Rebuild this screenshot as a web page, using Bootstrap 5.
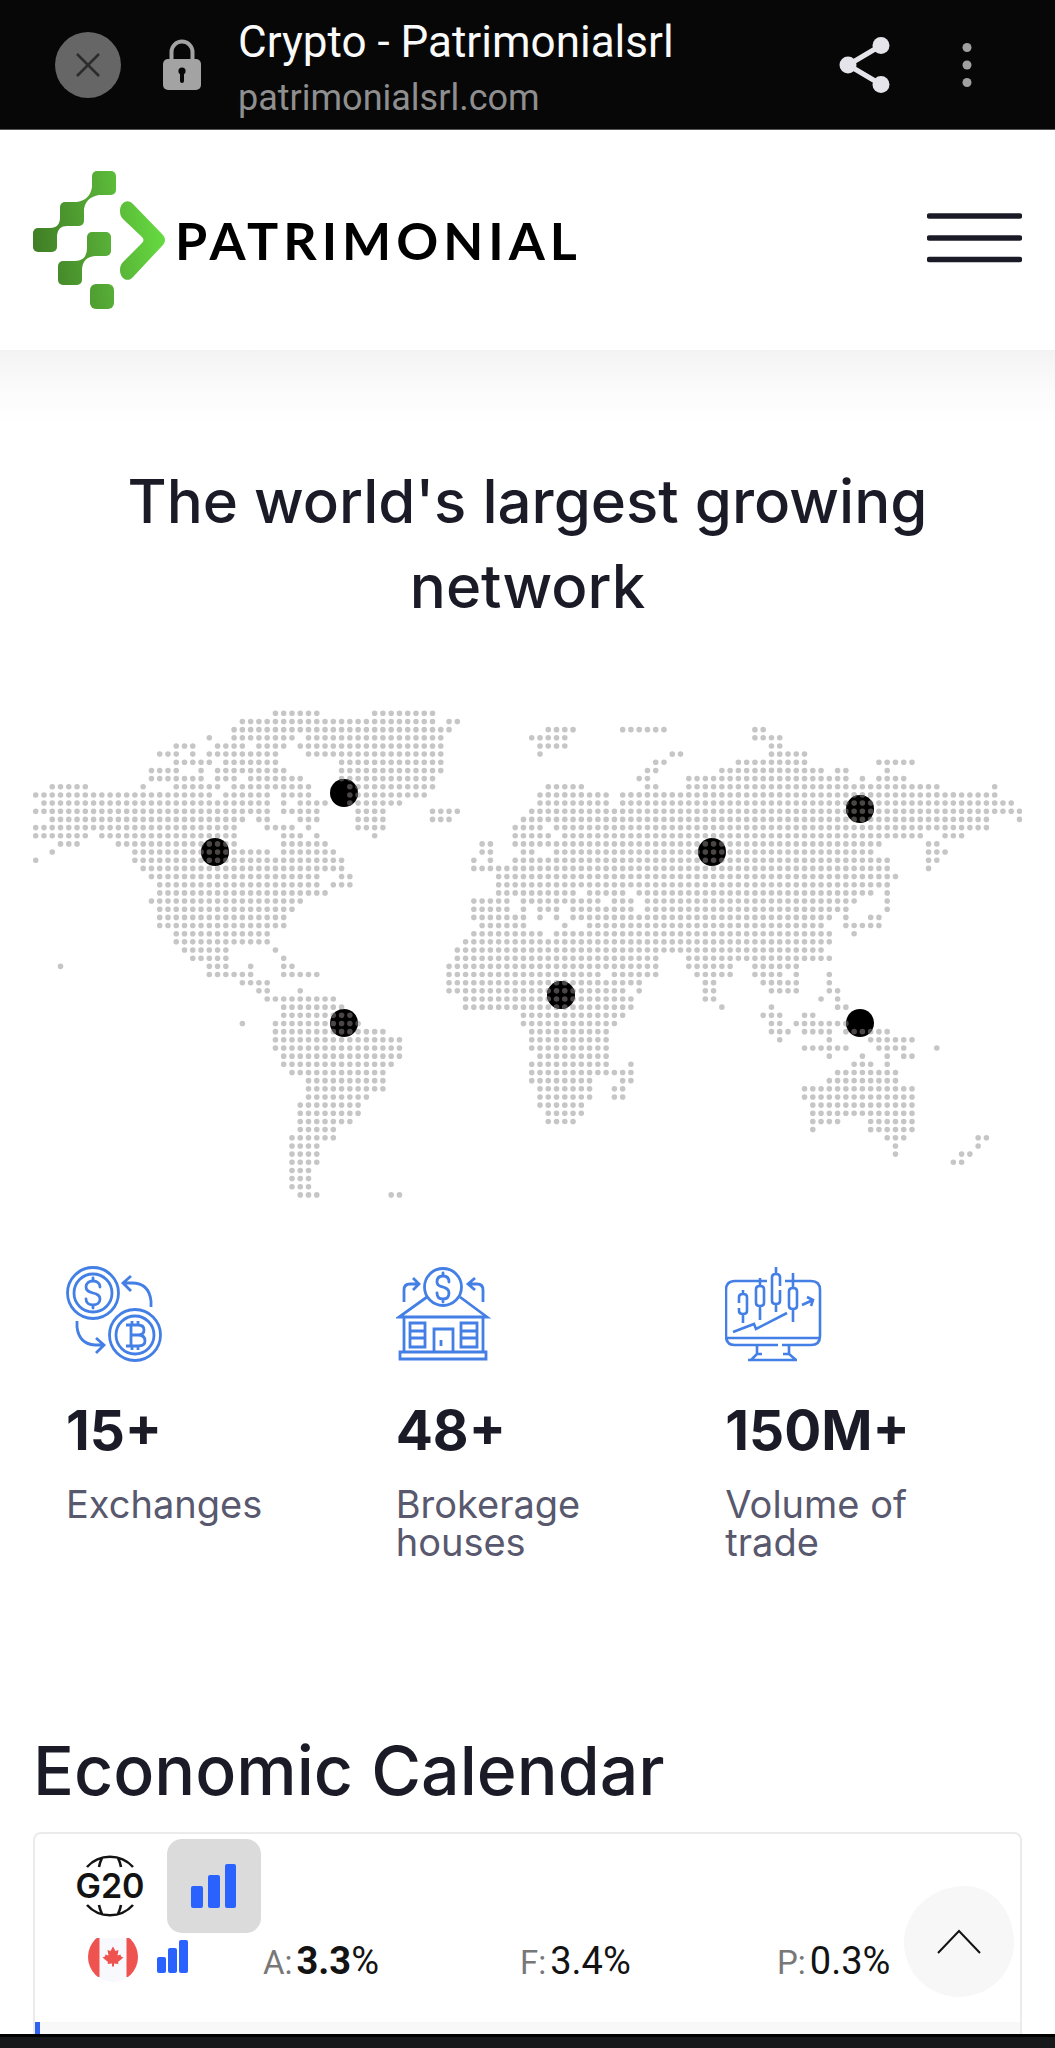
<!DOCTYPE html>
<html lang="en">
<head>
<meta charset="utf-8">
<meta name="viewport" content="width=device-width, initial-scale=1">
<title>Crypto - Patrimonialsrl</title>
<link href="https://cdn.jsdelivr.net/npm/bootstrap@5.3.0/dist/css/bootstrap.min.css" rel="stylesheet">
<style>
  body { font-family: Inter, "Open Sans", sans-serif; color: #1b1b28; background: #fff; }
  svg { display: block; flex: none; }
  .browser-bar { height: 130px; background: #070707; font-family: Roboto, sans-serif; padding: 0 76px 0 55px; border-bottom: 1px solid #555; }
  .browser-bar button { background: none; border: 0; padding: 0; }
  .lock-icon { margin: 0 37px 0 42px; }
  .tab-text { padding-top: 8px; }
  .tab-title { font-size: 44px; line-height: 58px; color: #fafafa; }
  .tab-host { font-size: 36px; line-height: 54px; color: #8f8f8f; }
  .site-head { height: 220px; padding: 0 33px; background: #fff; }
  .head-shadow { height: 88px; background: linear-gradient(#f3f3f3, #fbfbfb 45%, #fff 85%); }
  .wordmark { font: 700 52px/64px Lato, sans-serif; letter-spacing: 5px; color: #000; }
  .page-pad { padding-left: 33px; padding-right: 33px; }
  .net-title { font-size: 60px; line-height: 85px; font-weight: 500; padding: 21px 60px 79px; }
  .stat-grid { padding-top: 67px; }
  .stat-item { padding: 0 33px; }
  .stat-num { font-size: 55px; line-height: 60px; font-weight: 700; margin-top: 37px; }
  .stat-label { font-size: 38px; line-height: 38px; color: #58586e; margin-top: 25px; }
  .cal-title { font-size: 68px; line-height: 80px; font-weight: 500; padding-top: 169px; margin-bottom: 22px; }
  .cal-box { border: 2px solid #ebebeb; border-bottom: 0; border-radius: 8px 8px 0 0; position: relative; font-family: Roboto, sans-serif; color: #131313; }
  .cal-filters { height: 104px; padding: 5px 0 0 40px; gap: 19px; }
  .cal-filters button { border: 0; padding: 0; background: none; }
  .cal-filters .imp-btn { width: 94px; height: 94px; border-radius: 15px; background: #dbdbdb; display: flex; align-items: center; justify-content: center; }
  .cal-row { height: 84px; padding-left: 53px; }
  .imp-bars { margin: 2px 0 0 19px; }
  .cal-vals { padding-left: 75px; line-height: 46px; }
  .cal-vals > div { flex: 0 0 257px; }
  .cal-key { font-size: 33px; color: #787878; }
  .cal-val { font-size: 38px; }
  .cal-next { height: 12px; background: #f8f8f8; border-left: 5px solid #2f62f0; }
  .to-top { position: absolute; right: 6px; bottom: 37px; width: 110px; height: 111px; background: #f7f7f7; border: 0; padding: 0; border-radius: 56% 44% 50% 50% / 51% 51% 49% 49%; display: flex; align-items: center; justify-content: center; }
  .sys-bar { height: 14px; background: #17181a; border-top: 3px solid #000; }
</style>
</head>
<body>
<header class="browser-bar d-flex align-items-center">
  <button type="button" aria-label="Close tab">
    <svg width="66" height="66" viewBox="0 0 66 66"><circle cx="33" cy="33" r="33" fill="#666"/><path d="M22 22l22 22M44 22L22 44" stroke="#2c2c2c" stroke-width="2.6"/></svg>
  </button>
  <svg class="lock-icon" width="38" height="52" viewBox="0 0 38 52"><path d="M8.500 24V13a10.500 10.500 0 0 1 21 0v11" fill="none" stroke="#a3a3a3" stroke-width="4"/><rect y="20" width="38" height="31" rx="5" fill="#a3a3a3"/><circle cx="19" cy="32" r="3.600" fill="#070707"/><path d="M19 33v9" stroke="#070707" stroke-width="4" stroke-linecap="round"/></svg>
  <div class="flex-grow-1 tab-text">
    <div class="tab-title text-nowrap">Crypto - Patrimonialsrl</div>
    <div class="tab-host text-nowrap">patrimonialsrl.com</div>
  </div>
  <button type="button" aria-label="Share" class="me-5">
    <svg width="52" height="58" viewBox="0 0 52 58"><path d="M42 9.500L9 29l33 19.500" fill="none" stroke="#e4e4ea" stroke-width="5"/><g fill="#e4e4ea"><circle cx="42" cy="9.500" r="8.500"/><circle cx="9" cy="29" r="8.500"/><circle cx="42" cy="48.500" r="8.500"/></g></svg>
  </button>
  <button type="button" aria-label="More" class="ms-3">
    <svg width="24" height="46" viewBox="0 0 24 46" fill="#a0a0a0"><circle cx="12" cy="5.500" r="4.500"/><circle cx="12" cy="23" r="4.500"/><circle cx="12" cy="40.500" r="4.500"/></svg>
  </button>
</header>

<nav class="site-head d-flex align-items-center justify-content-between">
  <a href="#" class="d-flex align-items-center text-decoration-none" aria-label="Patrimonial home">
    <svg width="142" height="138" viewBox="0 0 142 138">
      <defs><linearGradient id="leaf" gradientUnits="userSpaceOnUse" x1="0" y1="80" x2="132" y2="60"><stop offset="0" stop-color="#3f7d25"/><stop offset=".5" stop-color="#55a935"/><stop offset="1" stop-color="#66dc40"/></linearGradient></defs>
      <g fill="url(#leaf)">
        <rect x="59" y="0" width="24" height="24" rx="5"/><rect x="27" y="31" width="24" height="24" rx="5"/><rect x="0" y="57" width="24" height="24" rx="5"/>
        <rect x="54" y="61" width="24" height="24" rx="5"/><rect x="25" y="90" width="24" height="24" rx="5"/><rect x="57" y="113" width="24" height="25" rx="6"/>
        <path d="M59 16Q57 29 44 31L51 38Q53 26 66 24ZM27 46Q27 57 17 57L24 64Q25 55 34 55ZM54 77Q54 90 42 90L49 98Q50 86 62 85Z"/>
        <path d="M87 40c0-9 8-13 13-7l29 30c4 4 4 8 0 12l-29 31c-5 6-13 2-13-7 0-4 1-6 4-9l18-18c2-2 2-4 0-6L91 49c-3-3-4-5-4-9z"/>
      </g>
    </svg>
    <span class="wordmark">PATRIMONIAL</span>
  </a>
  <button type="button" class="border-0 bg-transparent p-0" aria-label="Menu">
    <svg width="95" height="54" viewBox="0 0 95 54" stroke="#1b1b28" stroke-width="5.500" stroke-linecap="round"><path d="M2.500 3h90M2.500 25h90M2.500 46.500h90"/></svg>
  </button>
</nav>
<div class="head-shadow"></div>

<main class="page-pad">
  <h1 class="net-title text-center m-0">The world's largest growing network</h1>

  <svg class="w-100 h-auto" viewBox="0 0 989 490" role="img" aria-label="World map of network locations">
    <defs>
      <path id="dots"/>
      <clipPath id="pinClip"></clipPath>
    </defs>
    <use href="#dots" fill="#c6c6c6"/>
    <g id="pins" fill="#000"></g>
    <use href="#dots" fill="#4b4646" clip-path="url(#pinClip)"/>
  </svg>

  <section class="row g-0 stat-grid">
    <div class="col-4 stat-item">
      <svg width="96" height="98" viewBox="0 0 96 98" fill="none" stroke="#447fe5" stroke-width="2.800">
        <circle cx="27" cy="28" r="25.500"/><circle cx="27" cy="28" r="19"/><circle cx="69" cy="70" r="25.500"/><circle cx="69" cy="70" r="19"/>
        <path d="M34 22c0-4-3-6-7-6s-7 2-7 6 3 5 7 6 7 2 7 6-3 6-7 6-7-2-7-6M27 13v3M27 40v3" stroke-linecap="round"/>
        <path d="M60 60h12q6 0 6 5t-6 5q7 0 7 6 0 5-7 5H60M65 60v21M65 70h7M66 56v4M72 56v4M66 81v4M72 81v4"/>
        <path d="M85 42V36Q83 18 66 18H58M65 11l-8 7 8 8M11 56v6q2 17 18 18h8M30 73l8 7-8 8"/>
      </svg>
      <div class="stat-num">15+</div>
      <div class="stat-label">Exchanges</div>
    </div>
    <div class="col-4 stat-item">
      <svg width="96" height="98" viewBox="0 0 96 98" fill="none" stroke="#447fe5" stroke-width="2.800">
        <circle cx="47" cy="22" r="18.500"/>
        <path d="M53 17c0-4-2-6-6-6s-6 2-6 6 3 4 6 5 6 2 6 6-2 6-6 6-6-2-6-6M47 8v3M47 34v3" stroke-linecap="round"/>
        <path d="M31 32L3 52h88L64 32M8 53v34M87 53v34M4 87h86v7H4ZM38 87V64h19v23M45 75v6M14 58h15v24H14ZM65 58h16v24H65ZM14 66h15M14 73h15M65 66h16M65 73h16"/>
        <path d="M8 37V25q0-6 6-6h8M17 13l6 6-6 6M87 37V25q0-6-6-6h-8M79 13l-7 6 7 6"/>
      </svg>
      <div class="stat-num">48+</div>
      <div class="stat-label">Brokerage houses</div>
    </div>
    <div class="col-4 stat-item">
      <svg width="98" height="98" viewBox="0 0 98 98" fill="none" stroke="#447fe5" stroke-width="2.600">
        <path d="M42 16H10q-9 0-9 9v46q0 9 9 9h43M60 16h26q9 0 9 9v46q0 9-9 9H57M1 73h94M32 80v9l-6 6M64 80v9l7 6M31 89h6M64 89h-6M23 95h49"/>
        <path d="M18 25v4M14 38v-6q0-3 4-3t4 3v14q0 3-4 3t-4-3v-3M18 49v9M35 13v8M31 24q0-3 4-3t4 3v14q0 3-4 3t-4-3ZM35 41v14M51 2v7M55 21v-9q0-3-4-3t-4 3v24q0 3 4 3t4-3V25M51 39v8M68 8v15M64 26q0-3 4-3t4 3v15q0 3-4 3t-4-3ZM68 44v13"/>
        <path d="M8 67l21-8 2 5 31-16M77 40l11-5M82 32l6 3-2 6"/>
      </svg>
      <div class="stat-num">150M+</div>
      <div class="stat-label">Volume of trade</div>
    </div>
  </section>

  <h2 class="cal-title">Economic Calendar</h2>
  <section class="cal-box">
    <div class="cal-filters d-flex align-items-start">
      <button type="button" aria-label="G20 countries" class="pt-3">
        <svg width="73" height="64" viewBox="0 0 73 64">
          <g fill="none" stroke="#131313" stroke-width="2.600"><path d="M12 12a31 31 0 0 1 46 0M12 50a31 31 0 0 0 46 0M27 3q-2 4-3 9M43 3q2 4 3 9M24 50q1 5 3 9M46 50q-1 5-3 9"/></g>
          <text x="35" y="43" text-anchor="middle" font-family="Inter, sans-serif" font-weight="600" font-size="34" fill="#131313">G20</text>
        </svg>
      </button>
      <button type="button" class="imp-btn" aria-label="Importance">
        <svg width="46" height="46" viewBox="0 0 46 46" fill="#2962ff"><rect y="23" width="12" height="22" rx="2"/><rect x="17" y="12" width="12" height="33" rx="2"/><rect x="34" y="1" width="11" height="44" rx="2"/></svg>
      </button>
    </div>
    <div class="cal-row d-flex align-items-start">
      <svg width="50" height="44" viewBox="0 0 50 44">
        <defs><clipPath id="flagClip"><circle cx="25" cy="19" r="25"/></clipPath></defs>
        <g clip-path="url(#flagClip)"><path fill="#f8f9fd" d="M0 0h50v44H0z"/><path fill="#ef5350" d="M0 0h11.500v39H0zM38.500 0H50v39H38.500zM25 8.500l2.500 4.500 3-1-1 5.500 3-1 .5 2 2.500 1-5.500 4.500.5 2-4.500-.5v3h-2v-3l-4.500.5.5-2-5.500-4.500 2.500-1 .5-2 3 1-1-5.500 3 1z"/></g>
      </svg>
      <svg class="imp-bars" width="31" height="34" viewBox="0 0 31 34" fill="#2962ff"><rect y="17" width="9" height="16" rx="2"/><rect x="11" y="8" width="9" height="25" rx="2"/><rect x="22" width="9" height="33" rx="2"/></svg>
      <div class="cal-vals d-flex flex-grow-1">
        <div><span class="cal-key">A:</span> <span class="cal-val"><b class="fw-bold">3.3</b>%</span></div>
        <div><span class="cal-key">F:</span> <span class="cal-val">3.4%</span></div>
        <div class="flex-shrink-1"><span class="cal-key">P:</span> <span class="cal-val">0.3%</span></div>
      </div>
    </div>
    <div class="cal-next"></div>
    <button type="button" class="to-top" aria-label="Back to top">
      <svg width="46" height="26" viewBox="0 0 46 26" fill="none" stroke="#131313" stroke-width="2"><path d="M2 24L23 2l21 22"/></svg>
    </button>
  </section>
</main>
<footer class="sys-bar"></footer>

<script>
  // Land cells of the dotted map: one entry per row, each a list of column runs.
  const land = `29-34 41-48|25-48 50-51|24-50 62-65 71-76 87-88|21 24-31 33-49 60-64 87-90|17-19 22-25 27-30 32-49 61-64 89-90|15-17 19 21-29 33-49 61 77-78 89-93|17-21 23-29 37-49 75-76 85-93 102-106|14-17 20 22-30 37-49 74-75 83-95 97-98 103|14-20 22-24 26-32 37-48 73-74 79-98 100 102-105|2-6 13 17-22 24-33 38-48 62-66 74-75 79-109 116|0-21 23-28 30-33 38-47 61-69 71-116|1-28 30 32-35 38-44 61-69 71-118|0-28 30-34 39-42 48-51 60-119|2-25 27-28 32-34 39-42 48-50 59-115 119|0-24 28-31 33 39-42 58-61 63-115|0-6 8-24 30-32 34 41 58-62 64-107 110-112|3-5 10-24 30-35 54-55 58-102 108-109|2 12-28 30-36 54-55 59-60 63-101 108-110|0 12-37 53 55 58-103 108-109|13-37 53-103 108|14-34 37-38 56-104|15-34 36-38 56-103|15-35 56-65 67-71 73-101 103|14-32 53-57 59-68 70-72 74-99 103|15-31 53-57 59 61-63 65-72 74-98 103|15-30 53-59 61 63 65-96 98 101-102|15-30 54-59 64 67-95 98-102|17-28 53-61 63-96 99|17-28 52-96|18-23 29 51-95|19-23 30 51-75 79-96|3 21-23 26 30-31 50-75 79-84 87-92|21-26 30-34 50-68 70-75 80-84 87-90 92 96|25-28 50-73 81-82 88-92 96|27-28 32 50-71 73 81-82 89-92 96-97|28-36 52-72 81-82 95 97|30-37 52-72 83 89 97-98|30-38 59-71 88-90 93-94|25 29-39 59-70 89-90 92-98|29-42 60-69 89-91 93-96 98-103|29-44 60-69 90 96 101-106|29-44 60-69 93-98 102-105 109|30-44 61-69 96 100 103 105-106|30-43 60-69 72 99-101 103|31-42 60-72 97-104|33-42 60-67 71-72 96-104|33-42 61-67 70-71 93-106|33-40 61-67 70-71 93-106|32-39 61-66 94-106|32-39 62-66 94-106|32-38 62-65 94-97 101-106|32-36 94 101-106|31-36 103-105 114-115|31-34 104 114|31-34 104 112-113|31-34 111-112|31-33|31-33|31-33|32-34 43-44`;
  let d = '';
  land.split('|').forEach((row, r) => row.split(' ').forEach(run => {
    const [a, b = a] = run.split('-').map(Number);
    for (let c = a; c <= b; c++)
      d += `M${(c * 8.267 - 0.1).toFixed(2)} ${(5.3 + r * 8.163).toFixed(2)}a2.8 2.8 0 1 0 5.6 0a2.8 2.8 0 1 0-5.6 0z`;
  }));
  document.getElementById('dots').setAttribute('d', d);
  const pins = [[182, 144], [311, 85], [311, 315], [528, 287], [679, 144], [827, 101], [827, 315]]
    .map(([x, y]) => `<circle cx="${x}" cy="${y}" r="14"/>`).join('');
  document.getElementById('pins').innerHTML = pins;
  document.getElementById('pinClip').innerHTML = pins;
</script>
<script src="https://cdn.jsdelivr.net/npm/bootstrap@5.3.0/dist/js/bootstrap.bundle.min.js"></script>
</body>
</html>
